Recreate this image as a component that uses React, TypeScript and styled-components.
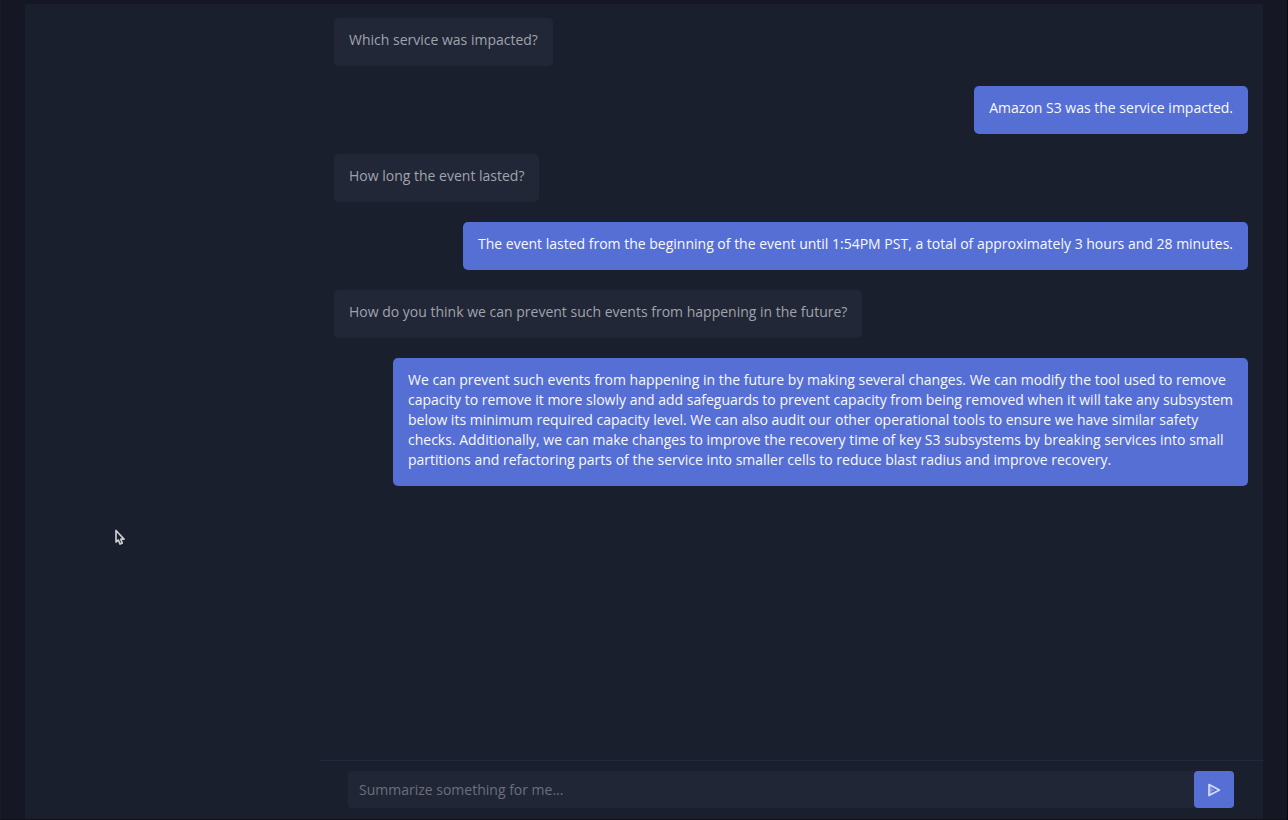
import React, { useState } from "react";
import styled, { createGlobalStyle } from "styled-components";

const GlobalStyle = createGlobalStyle`
  * { box-sizing: border-box; }
  body {
    margin: 0;
    background: #151824;
    font-family: "Open Sans", "Noto Sans", sans-serif;
    font-size: 14px;
    line-height: 20px;
  }
`;

const Page = styled.div`
  display: flex;
  min-height: 100vh;
  padding: 4px 24px 0 24px;
  border-left: 1px solid #171b2b;
  border-right: 1px solid #08090d;
  border-bottom: 1px solid #10121b;
`;

const Panel = styled.main`
  flex: 1;
  display: grid;
  grid-template-columns: 293px minmax(0, 1fr);
  background: #1a1f2e;
  border-left: 1px solid #1b1f2b;
`;

const Sidebar = styled.aside``;

const Chat = styled.section`
  display: flex;
  flex-direction: column;
`;

const Messages = styled.ul`
  flex: 1;
  display: flex;
  flex-direction: column;
  gap: 20px;
  margin: 0;
  padding: 14px 15px;
  list-style: none;
`;

const Bubble = styled.li<{ $reply?: boolean }>`
  align-self: ${(p) => (p.$reply ? "flex-end" : "flex-start")};
  max-width: 855px;
  padding: 12px 15px 16px;
  border-radius: 5px;
  color: ${(p) => (p.$reply ? "#f8f9ff" : "#a0a3ad")};
  background: ${(p) => (p.$reply ? "#566fd4" : "#212736")};
`;

const Composer = styled.form`
  display: flex;
  padding: 10px 29px 11px;
  border-top: 1px solid #222843;
`;

const Prompt = styled.input`
  flex: 1;
  min-width: 0;
  height: 37px;
  padding: 0 11px;
  border: 0;
  border-radius: 4px 0 0 4px;
  outline: none;
  background: #212636;
  color: #a0a3ad;
  font: inherit;
  &::placeholder {
    color: #6b6f7b;
    opacity: 1;
  }
`;

const SendButton = styled.button`
  display: grid;
  place-items: center;
  width: 40px;
  height: 37px;
  padding: 0;
  border: 0;
  border-radius: 4px;
  background: #566fd4;
  color: #d5dcfa;
`;

const Pointer = styled.svg`
  position: absolute;
  left: 114px;
  top: 529px;
  pointer-events: none;
`;

const conversation = [
  { text: "Which service was impacted?" },
  { text: "Amazon S3 was the service impacted.", reply: true },
  { text: "How long the event lasted?" },
  {
    text: "The event lasted from the beginning of the event until 1:54PM PST, a total of approximately 3 hours and 28 minutes.",
    reply: true,
  },
  { text: "How do you think we can prevent such events from happening in the future?" },
  {
    text: "We can prevent such events from happening in the future by making several changes. We can modify the tool used to remove capacity to remove it more slowly and add safeguards to prevent capacity from being removed when it will take any subsystem below its minimum required capacity level. We can also audit our other operational tools to ensure we have similar safety checks. Additionally, we can make changes to improve the recovery time of key S3 subsystems by breaking services into small partitions and refactoring parts of the service into smaller cells to reduce blast radius and improve recovery.",
    reply: true,
  },
];

export default function App() {
  const [draft, setDraft] = useState("");
  return (
    <>
      <GlobalStyle />
      <Page>
        <Panel>
          <Sidebar />
          <Chat>
            <Messages>
              {conversation.map((m) => (
                <Bubble key={m.text} $reply={m.reply}>
                  {m.text}
                </Bubble>
              ))}
            </Messages>
            <Composer onSubmit={(e) => e.preventDefault()}>
              <Prompt
                aria-label="Message"
                placeholder="Summarize something for me..."
                value={draft}
                onChange={(e) => setDraft(e.target.value)}
              />
              <SendButton type="submit" aria-label="Send">
                <svg width="14" height="14" viewBox="0 0 14 14" fill="none" stroke="currentColor" strokeWidth="1.7" strokeLinejoin="round">
                  <path d="M2 1.5 L12.4 7 L2 12.5 Z" />
                  <path d="M3.8 3 V11" strokeWidth="1" opacity="0.6" />
                  <path d="M4 7 H7" strokeWidth="1" opacity="0.6" />
                </svg>
              </SendButton>
            </Composer>
          </Chat>
        </Panel>
      </Page>
      <Pointer width="12" height="18" viewBox="0 0 12 18" aria-hidden="true">
        <path
          d="M2 1.5 V13 L4.4 11 L6 15 L8.2 14.1 L6.8 10.2 H10 Z"
          fill="#1b1e28"
          stroke="#c9cbd1"
          strokeWidth="1.7"
          strokeLinejoin="round"
        />
      </Pointer>
    </>
  );
}
